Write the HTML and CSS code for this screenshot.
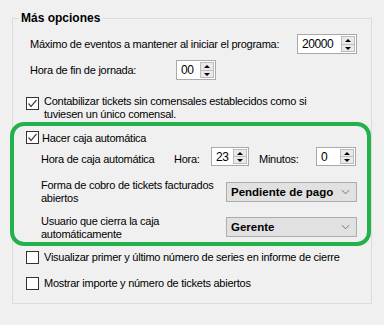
FILE: index.html
```html
<!DOCTYPE html>
<html lang="es">
<head>
  <meta charset="UTF-8">
  <title>Más opciones</title>
  <link rel="stylesheet" href="styles.css">
</head>
<body>
  <fieldset class="group">
    <legend>Más opciones</legend>

    <div class="row r-max">
      <span class="lbl">Máximo de eventos a mantener al iniciar el programa:</span>
      <div class="spin w-max">
        <span class="val">20000</span>
        <div class="btns"><div class="up"></div><div class="down"></div></div>
      </div>
    </div>

    <div class="row r-fin">
      <span class="lbl w-fin">Hora de fin de jornada:</span>
      <div class="spin w-fin2">
        <span class="val">00</span>
        <div class="btns"><div class="up"></div><div class="down"></div></div>
      </div>
    </div>

    <div class="check r-conta">
      <span class="box on"><svg viewBox="0 0 11 11"><polyline points="1.5,5.5 4,8.5 9.5,2"/></svg></span>
      <span class="txt">Contabilizar tickets sin comensales establecidos como si<br>tuviesen un único comensal.</span>
    </div>

    <div class="mark">
      <div class="check r-hacer">
        <span class="box on"><svg viewBox="0 0 11 11"><polyline points="1.5,5.5 4,8.5 9.5,2"/></svg></span>
        <span class="txt">Hacer caja automática</span>
      </div>

      <div class="row r-hora">
        <span class="lbl w-caja">Hora de caja automática</span>
        <span class="lbl w-hora">Hora:</span>
        <div class="spin w-23">
          <span class="val">23</span>
          <div class="btns"><div class="up"></div><div class="down"></div></div>
        </div>
        <span class="lbl w-min">Minutos:</span>
        <div class="spin w-0">
          <span class="val">0</span>
          <div class="btns"><div class="up"></div><div class="down"></div></div>
        </div>
      </div>

      <div class="row r-forma">
        <span class="lbl two">Forma de cobro de tickets facturados<br>abiertos</span>
        <div class="combo">
          <span>Pendiente de pago</span>
          <svg viewBox="0 0 10 6"><polyline points="1,1 5,5 9,1"/></svg>
        </div>
      </div>

      <div class="row r-usuario">
        <span class="lbl two">Usuario que cierra la caja<br>automáticamente</span>
        <div class="combo">
          <span>Gerente</span>
          <svg viewBox="0 0 10 6"><polyline points="1,1 5,5 9,1"/></svg>
        </div>
      </div>
    </div>

    <div class="check r-visu">
      <span class="box"></span>
      <span class="txt">Visualizar primer y último número de series en informe de cierre</span>
    </div>

    <div class="check r-mostrar">
      <span class="box"></span>
      <span class="txt">Mostrar importe y número de tickets abiertos</span>
    </div>
  </fieldset>
</body>
</html>
```

FILE: styles.css
```css
* {
  margin: 0;
  padding: 0;
  box-sizing: border-box;
}
body {
  background-color: #f0f0f0;
  font-family: "Liberation Sans", Arial, sans-serif;
  font-size: 11px;
  letter-spacing: -0.25px;
  color: #000;
  width: 384px;
  height: 325px;
  overflow: hidden;
}
.group {
  margin: 11px 0 0 12px;
  width: 359px;
  height: 293px;
  border: 1px solid #dcdcdc;
  padding: 0;
}
.group legend {
  margin-left: 6px;
  padding: 0 2px;
  font-weight: bold;
  font-size: 12px;
  letter-spacing: 0;
  line-height: 14px;
}

/* filas */
.row {
  display: flex;
  align-items: center;
  margin-left: 17px;
}
.lbl {
  line-height: 14px;
  white-space: nowrap;
}
.r-max {
  margin-top: 9px;
  height: 20px;
}
.r-max .lbl {
  width: 267px;
}
.r-fin {
  margin-top: 6px;
  height: 20px;
}
.w-fin {
  width: 146px;
}

/* spinner */
.spin {
  display: flex;
  height: 20px;
  background-color: #fff;
  border: 1px solid #a9a9a9;
  padding: 1px;
}
.spin .val {
  flex: 1;
  padding-left: 3px;
  line-height: 16px;
  font-size: 12px;
  letter-spacing: -0.4px;
}
.btns {
  width: 14px;
  display: flex;
  flex-direction: column;
  border: 1px solid #bcbcbc;
  background-color: #e9e9e9;
}
.btns div {
  flex: 1;
  position: relative;
}
.btns .up {
  border-bottom: 1px solid #bcbcbc;
}
.btns .up::after,
.btns .down::after {
  content: "";
  position: absolute;
  left: 3px;
  border-left: 3px solid transparent;
  border-right: 3px solid transparent;
}
.btns .up::after {
  top: 2px;
  border-bottom: 3px solid #000;
}
.btns .down::after {
  top: 2px;
  border-top: 3px solid #000;
}
.w-max {
  width: 60px;
}
.w-fin2 {
  width: 40px;
}
.w-23 {
  width: 38px;
}
.w-0 {
  width: 40px;
}

/* checkboxes */
.check {
  display: flex;
  align-items: flex-start;
  margin-left: 13px;
}
.box {
  flex: none;
  width: 13px;
  height: 13px;
  border: 1px solid #333;
  background-color: #fff;
  margin-right: 5px;
}
.box svg {
  display: block;
  width: 11px;
  height: 11px;
  fill: none;
  stroke: #444;
  stroke-width: 1.2;
}
.txt {
  line-height: 14px;
}
.r-conta {
  margin-top: 17px;
}
.r-conta .txt {
  margin-top: -2px;
  line-height: 13px;
}
.r-visu {
  margin-top: 5px;
}
.r-mostrar {
  margin-top: 13px;
}
.r-visu .txt,
.r-mostrar .txt {
  margin-top: -1px;
}

/* recuadro verde */
.mark {
  margin: 1px 0 0 -3px;
  width: 361px;
  height: 124px;
  border: 4px solid #22b14c;
  border-radius: 14px;
  padding-top: 5px;
}
.mark .check {
  margin-left: 12px;
}
.mark .row {
  margin-left: 27px;
}
.r-hacer .box {
  margin-right: 3px;
}
.r-hora {
  margin-top: 2px;
  height: 19px;
}
.r-hora .lbl {
  margin-top: 4px;
}
.r-hora .spin {
  height: 19px;
}
.w-caja {
  width: 133px;
}
.w-hora {
  width: 37px;
}
.w-min {
  width: 67px;
  padding-left: 10px;
}
.r-forma {
  margin-top: 13px;
  align-items: flex-start;
}
.r-usuario {
  margin-top: 10px;
  align-items: flex-start;
}
.two {
  width: 185px;
  line-height: 13px;
}
.combo {
  width: 131px;
  height: 20px;
  display: flex;
  align-items: center;
  justify-content: space-between;
  background-color: #e1e1e1;
  border: 1px solid #adadad;
  padding: 0 6px 0 4px;
  font-weight: bold;
  font-size: 11.5px;
  letter-spacing: 0;
}
.combo svg {
  width: 9px;
  height: 6px;
  fill: none;
  stroke: #666;
  stroke-width: 1;
}
.r-forma .combo {
  margin-top: 3px;
}
.r-usuario .combo {
  margin-top: 2px;
}
```
